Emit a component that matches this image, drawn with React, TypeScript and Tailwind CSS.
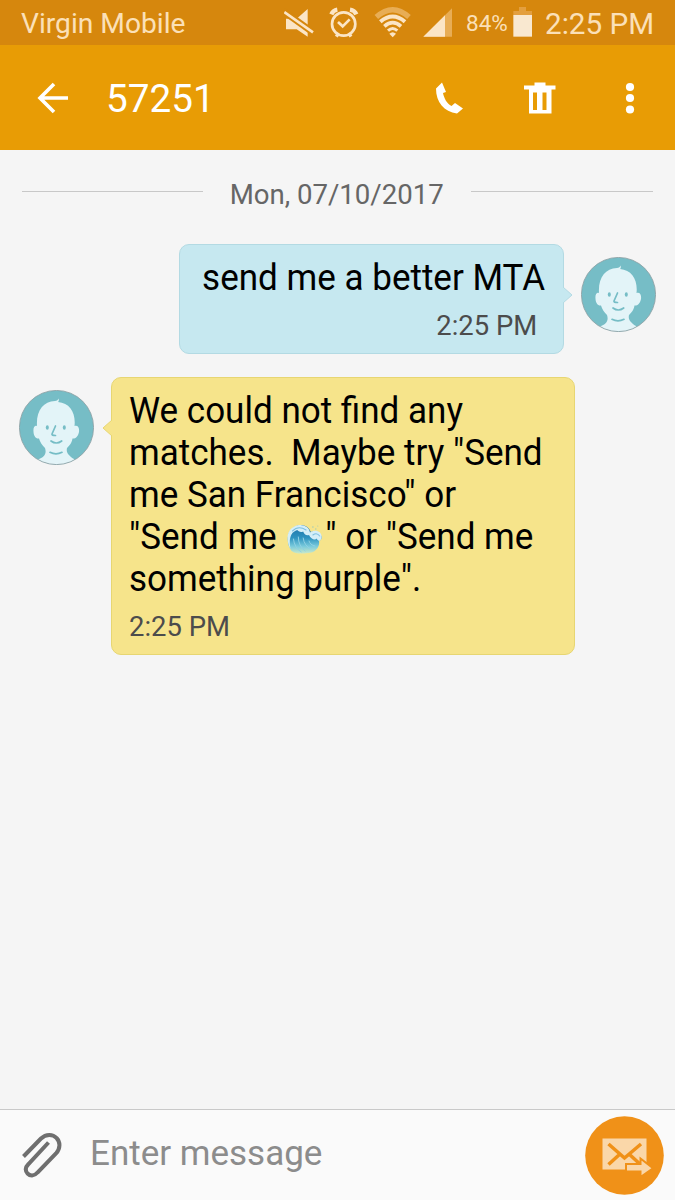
import type { ReactNode } from 'react';

interface BubbleProps {
  side: 'left' | 'right';
  time: string;
  children: ReactNode;
}

const MuteIcon = () => (
  <svg viewBox="42 0 90 135" className="h-[45px] w-[30px] shrink-0">
    <path d="M48 56H80L113 27V110L80 88H48Z" fill="#fbe5c6" />
    <path d="M38 32L134 101" stroke="#d6870d" strokeWidth="20" />
    <path d="M43 36L129 97" stroke="#fbe5c6" strokeWidth="8" />
  </svg>
);

const AlarmIcon = () => (
  <svg viewBox="177 0 90 135" className="h-[45px] w-[30px] shrink-0" fill="none" stroke="#fbe5c6">
    <circle cx="221" cy="72" r="35" strokeWidth="8" />
    <path d="M204 66L218 79L239 58" strokeWidth="8" />
    <path d="M184 43Q189 31 202 29M240 29Q254 31 259 43" strokeWidth="13" />
    <path d="M205 101L199 110M237 101L243 110" strokeWidth="10" />
  </svg>
);

const WifiIcon = () => (
  <svg viewBox="312 0 111 135" className="h-[45px] w-[37px] shrink-0" fill="none" stroke="#fbe5c6">
    <path d="M319 51Q368 7 417 51" stroke="#e8ad55" strokeWidth="16" />
    <path d="M331 65Q368 34 405 65" strokeWidth="12" />
    <path d="M343 79Q368 57 393 79" strokeWidth="11" />
    <path d="M354 92Q368 79 382 92" strokeWidth="9" />
    <path d="M358 101Q368 92 378 101L368 112Z" fill="#fbe5c6" stroke="none" />
  </svg>
);

const SignalIcon = () => (
  <svg viewBox="456 0 93 135" className="h-[45px] w-[31px] shrink-0">
    <path d="M460 110L546 25V110Z" fill="#e8ad55" />
    <path d="M460 110L525 46V110Z" fill="#fbe5c6" />
  </svg>
);

const BatteryIcon = () => (
  <svg viewBox="189 0 57 135" className="h-[45px] w-[19px] shrink-0">
    <path d="M190 33H207V21H228V33H246V46H190Z" fill="#e39f3f" />
    <path d="M190 45H246V110H190Z" fill="#f9e8d0" />
  </svg>
);

const StatusBar = () => (
  <div className="flex h-[45px] items-start bg-[#d6870d] leading-[46px] text-[#fbe0b8]">
    <span className="ml-[21px] w-[263px] text-[28.200px] leading-[48px]">Virgin Mobile</span>
    <MuteIcon />
    <div className="w-[15px]" />
    <AlarmIcon />
    <div className="w-[15px]" />
    <WifiIcon />
    <div className="w-[11px]" />
    <SignalIcon />
    <span className="ml-[13px] w-[47px] text-[22.500px] leading-[47px]">84%</span>
    <BatteryIcon />
    <span className="ml-[13px] text-[29.700px] leading-[47px] whitespace-nowrap">2:25 PM</span>
  </div>
);

const Header = () => (
  <header className="flex h-[105px] items-center bg-[#e89c05] text-white">
    <svg viewBox="0 0 32 32" className="ml-[37px] h-8 w-8" fill="none" stroke="currentColor" strokeWidth="3.600">
      <path d="M31 16H3M17 2L3 16L17 30" />
    </svg>
    <h1 className="ml-[37px] w-[326px] pt-[2px] text-[38.700px] leading-[52px]">57251</h1>
    <svg viewBox="0 0 36 36" className="h-9 w-9" fill="currentColor">
      <path d="M10 2.500L4 8.500C4 22 12 32 25 33.500L31 28.500L23 23L19.500 26C15 24 12 18 11 13L14 12Z" />
    </svg>
    <svg viewBox="0 0 32 32" className="ml-[56px] h-8 w-8" fill="currentColor">
      <path fillRule="evenodd" d="M10.500 .5H21.500V3.500H31.500V7.500H27.500V31.500H5V7.500H0V3.500H10.500ZM9 10.500V28H13V10.500ZM18.500 10.500V28H22.500V10.500Z" />
    </svg>
    <svg viewBox="0 0 10 32" className="ml-[69px] h-8 w-[10px]" fill="currentColor">
      <circle cx="5" cy="5" r="4.100" />
      <circle cx="5" cy="16" r="4.100" />
      <circle cx="5" cy="27.500" r="4.100" />
    </svg>
  </header>
);

const Avatar = () => (
  <svg viewBox="0 0 75 75" className="mt-[13px] h-[75px] w-[75px] shrink-0">
    <clipPath id="face">
      <circle cx="37.500" cy="37.500" r="37" />
    </clipPath>
    <circle cx="37.500" cy="37.500" r="37" fill="#76bdc6" />
    <path
      clipPath="url(#face)"
      fill="#e3f4f8"
      d="M18 36C17 21 24 11.500 36 11C38 11 39 10 39.500 8.500C40 10 40 11 39 12C51 13 57 23 55.500 36C59 35 60.500 38 60 42C59 47 56 49 53.500 48.500C53 53 50 56 48 58C47 62 49 65 55 69V76H19V69.500C25 67 28 64 26 58C23 55 21 52 20 48.500C17 49 14.500 46 14.500 41.500C14 37 16 35 18 36Z"
    />
    <g fill="none" stroke="#76bdc6" strokeWidth="1.700" strokeLinecap="round">
      <path d="M36.500 36L33 44Q32.500 45.500 36.500 45.500M32 51Q37.300 55 42.700 51M31 62.300Q37 65.500 43 62.300" />
    </g>
    <ellipse cx="28.300" cy="37.500" rx="1.500" ry="2.300" fill="#76bdc6" />
    <ellipse cx="45.300" cy="37.500" rx="1.500" ry="2.300" fill="#76bdc6" />
    <circle cx="37.500" cy="37.500" r="37.100" fill="none" stroke="#889ca0" strokeWidth=".8" />
  </svg>
);

const WaveEmoji = () => (
  <svg viewBox="0 0 38 34" className="mr-[2px] ml-px inline-block h-[34px] w-[38px] align-[-8px]">
    <defs>
      <linearGradient id="water" x1="0" y1="0" x2="0" y2="1">
        <stop offset="0" stopColor="#1d6fa5" />
        <stop offset=".45" stopColor="#2e93c0" />
        <stop offset=".75" stopColor="#7bcbdc" />
        <stop offset="1" stopColor="#cbe9c8" />
      </linearGradient>
    </defs>
    <path
      fill="url(#water)"
      d="M5 28C-1 20 0 8 8 4C14 0 22 2 25 9C29 7 35 9 36 14C36 17 34 18 33 17C35 23 30 30 22 30C15 31 9 31 5 28Z"
    />
    <path
      fill="#d4eef8"
      d="M4 26C-1 17 0 7 8 3.500C15 0 23 3 24 9.500C29 6 36 8 36 14C36 18 32 19 31 15.500C29 18 25 16 23 12C20 13 18 11 17 8.500C14 10 12 8 11 7C4 9 2 16 4 26Z"
    />
    <g fill="none" strokeLinecap="round">
      <path stroke="#8fd0e4" strokeWidth="1" d="M7 16Q8 25 15 29M12 14Q12 23 19 28M17 15Q18 23 25 26M23 18Q24 22 29 23" />
      <path stroke="#7dbfe0" strokeWidth="1.100" d="M6 8Q12 2 20 7M27 12Q31 9 34 13" />
    </g>
    <g fill="#a3cdb7">
      <circle cx="27" cy="4" r=".8" />
      <circle cx="30" cy="6" r=".7" />
      <circle cx="32" cy="3" r=".6" />
    </g>
  </svg>
);

const Bubble = ({ side, time, children }: BubbleProps) => {
  const isSent = side === 'right';

  return (
    <div
      className={`relative rounded-[10px] border pt-[12px] pb-[11px] text-[36px] leading-[42px] text-black ${
        isSent
          ? 'mr-[17px] w-[385px] border-[#b3dae3] bg-[#c6e8f0] pr-[18px] text-right'
          : 'ml-[17px] w-[464px] border-[#e7d672] bg-[#f6e48b] pl-[17px]'
      }`}
    >
      <div className={`scale-x-[0.973] whitespace-pre ${isSent ? 'origin-right' : 'origin-left'}`}>{children}</div>
      <p
        className={`mt-[10px] scale-x-[0.963] text-[28.500px] leading-[33px] text-[#4c4c4c] ${
          isSent ? 'origin-right pr-[8px]' : 'origin-left'
        }`}
      >
        {time}
      </p>
      {isSent ? (
        <svg viewBox="0 0 10 18" className="absolute top-[41px] -right-[10px] h-[18px] w-[10px]">
          <path d="M0 1L9 9L0 17" fill="#c6e8f0" stroke="#b3dae3" />
        </svg>
      ) : (
        <svg viewBox="0 0 10 18" className="absolute top-[41px] -left-[10px] h-[18px] w-[10px]">
          <path d="M10 1L1 9L10 17" fill="#f6e48b" stroke="#e7d672" />
        </svg>
      )}
    </div>
  );
};

const Composer = () => (
  <footer className="flex h-[91px] items-center border-t border-[#c9c9c9] bg-[#fafafa]">
    <svg viewBox="21 36 42 48" className="ml-[21px] h-12 w-[42px]" fill="none" stroke="#6f6f6f" strokeWidth="4">
      <path d="M23.500 61.500L41 43.500C46 38.500 53 39 56.500 43C60.500 47 60.500 53.500 56 58.500L37.500 77.500C34 81.500 30 81 27.500 78.500C25 75.500 25.500 72 28.500 69L48.500 47.500" />
    </svg>
    <span className="ml-[27px] w-[495px] pb-[3px] text-[35px] leading-[42px] text-[#8c8c8c]">Enter message</span>
    <button type="button" aria-label="Send">
      <svg viewBox="0 0 79 79" className="block h-[79px] w-[79px]">
        <circle cx="39.500" cy="39.500" r="39.300" fill="#f09118" />
        <path d="M17.500 22.500H61.500V53.500H17.500Z" fill="#fad7a9" />
        <path d="M23.500 28L39.500 42L56 28M23.500 48.500L35 38M44 38L56 49" fill="none" stroke="#f09118" strokeWidth="3.500" />
        <path d="M41 48H55.500V42.500L68 52.300L55.500 61V55.500H41Z" fill="#fad7a9" stroke="#f09118" strokeWidth="2" />
      </svg>
    </button>
  </footer>
);

export default function App() {
  return (
    <div className="flex h-[1200px] w-[675px] flex-col overflow-hidden bg-[#f5f5f5] font-['Roboto',sans-serif]">
      <StatusBar />
      <Header />
      <main className="flex-1">
        <div className="flex h-[94px] items-start justify-between px-[22px]">
          <div className="mt-[41px] h-px w-[181px] bg-[#c8c8c8]" />
          <span className="mt-[28px] scale-x-[0.985] text-[28px] leading-[34px] text-[#666]">Mon, 07/10/2017</span>
          <div className="mt-[41px] h-px w-[182px] bg-[#c8c8c8]" />
        </div>
        <div className="flex justify-end pr-[19px]">
          <Bubble side="right" time="2:25 PM">
            <p>send me a better MTA</p>
          </Bubble>
          <Avatar />
        </div>
        <div className="mt-[23px] flex pl-[19px]">
          <Avatar />
          <Bubble side="left" time="2:25 PM">
            <p>We could not find any</p>
            <p>{'matches.  Maybe try "Send'}</p>
            <p>me San Francisco" or</p>
            <p className="h-[42px]">
              {'"Send me '}
              <WaveEmoji />
              {'" or "Send me'}
            </p>
            <p>something purple".</p>
          </Bubble>
        </div>
      </main>
      <Composer />
    </div>
  );
}
